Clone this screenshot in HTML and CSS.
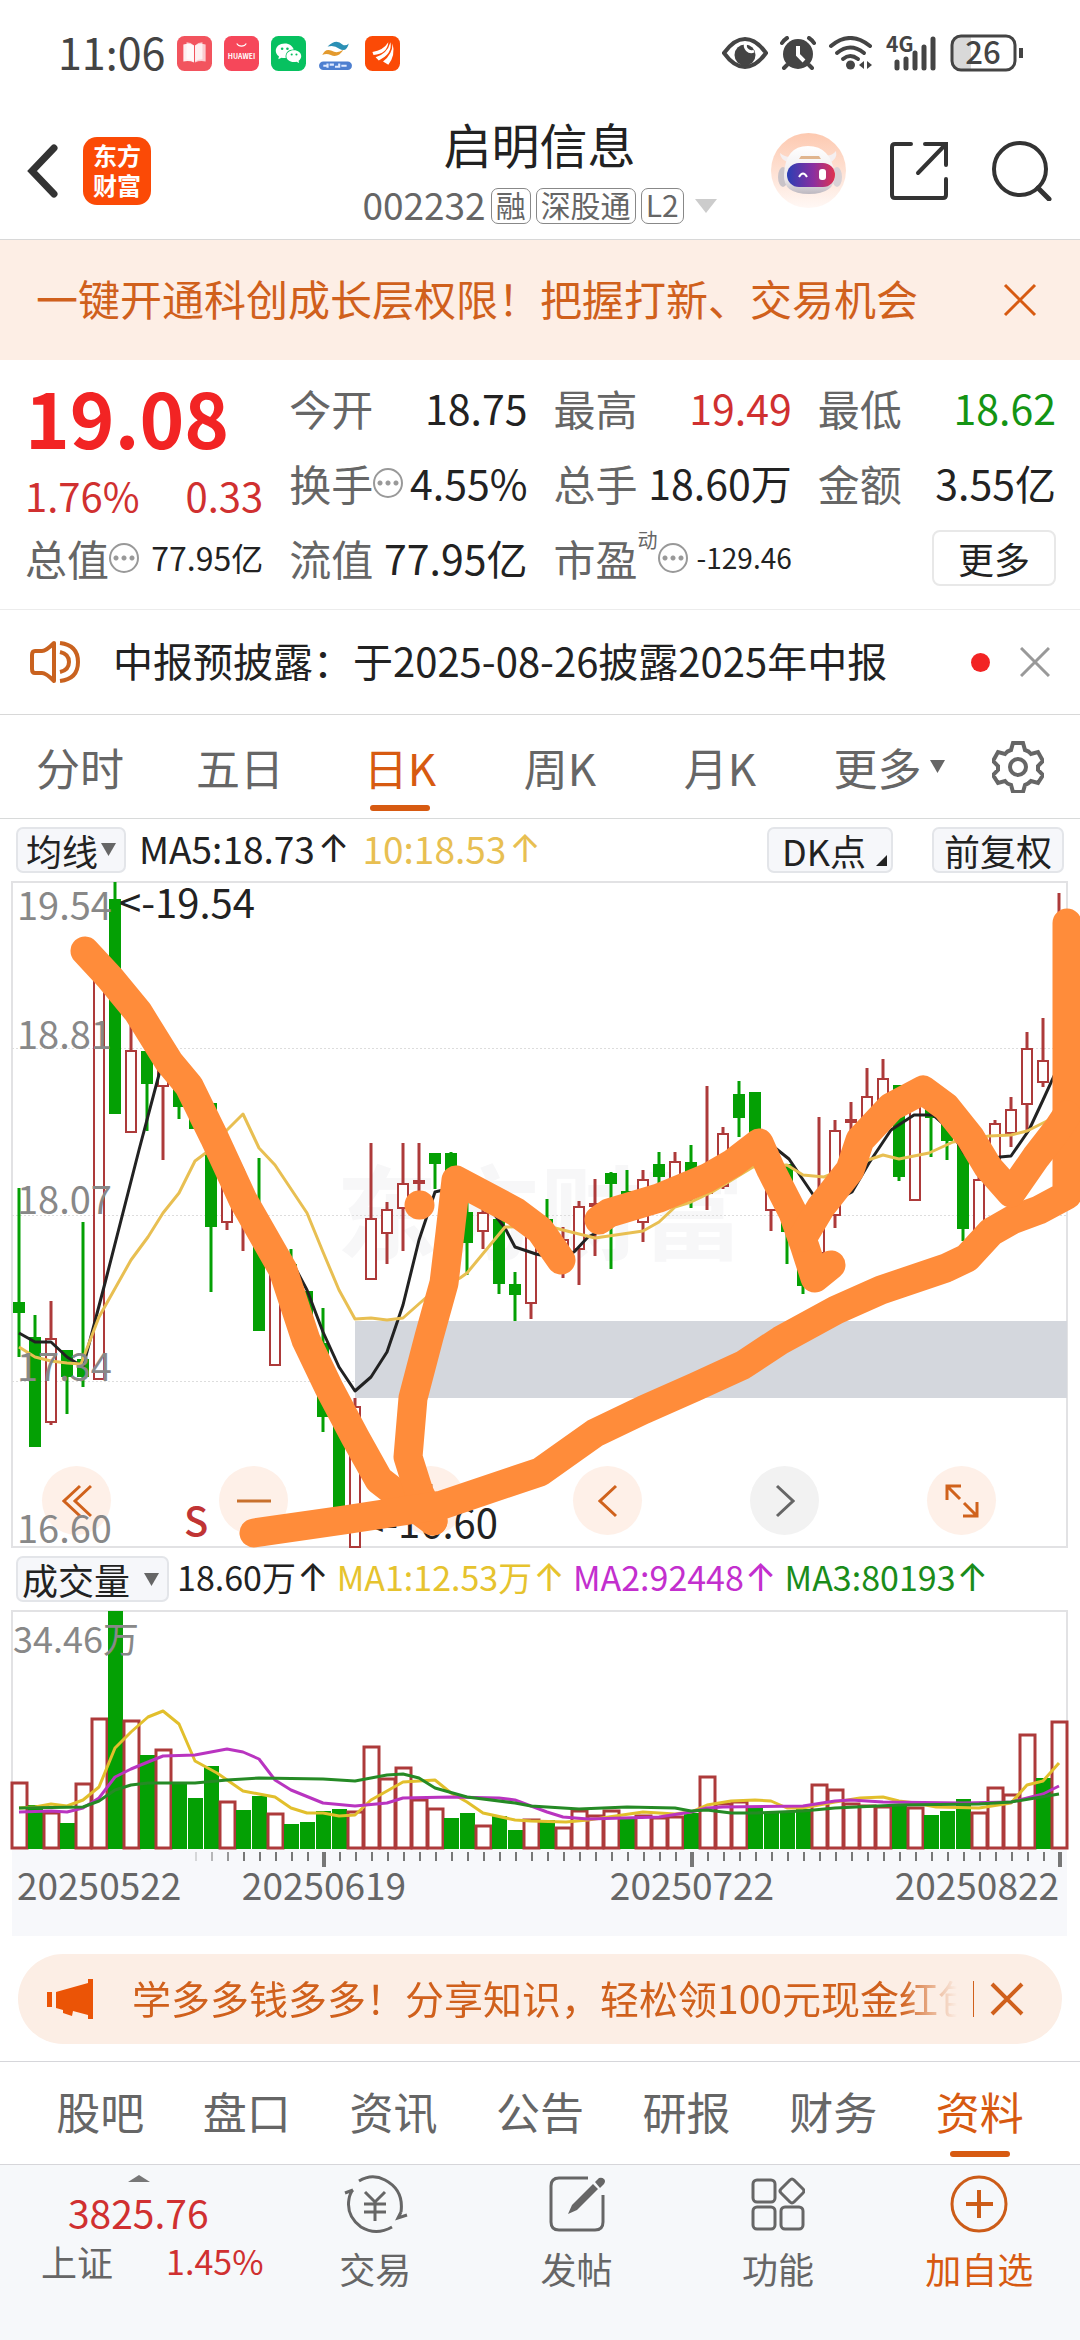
FILE: index.html
```html
<!DOCTYPE html>
<html lang="zh-CN">
<head>
    <meta charset="UTF-8">
    <meta name="viewport" content="width=device-width, initial-scale=1.0">
    <title>启明信息 002232</title>
    <link rel="stylesheet" href="styles.css">
</head>
<body>
    <div class="status">
        <span class="clock">11:06</span>
        <svg class="app-icon" viewBox="0 0 33 33"><rect width="33" height="33" rx="7" fill="#f2545e"/><path d="M6 8q6-2 10 1v16q-4-2-10-1z" fill="#fff" opacity=".9"/><path d="M27 8q-6-2-10 1v16q4-2 10-1z" fill="#fff" opacity=".7"/><path d="M9 6q4 0 7 3v15q-3-2-7-2zM24 6q-4 0-7 3v15q3-2 7-2z" fill="#fff" opacity=".7"/></svg>
        <svg class="app-icon" viewBox="0 0 33 33"><rect width="33" height="33" rx="7" fill="#f6475a"/><path d="M12 7a5 4.500 0 0 0 9 0" fill="none" stroke="#fff" stroke-width="1"/><text x="16.500" y="22" font-size="6.500" font-weight="700" fill="#fff" text-anchor="middle">HUAWEI</text></svg>
        <svg class="app-icon" viewBox="0 0 33 33"><rect width="33" height="33" rx="7" fill="#07c160"/><path d="M13 7c-5 0-8.500 3-8.500 7 0 2 1 4 3 5.200l-.6 2.800 3-1.600q2 .5 4 .3c-1-5 3-8.200 7.500-8C20.500 9.500 17.500 7 13 7z" fill="#fff"/><path d="M21.500 13.500c-4 0-7 2.500-7 5.500s3 5.500 7 5.500q1.500 0 2.500-.3l2.500 1.300-.5-2.200c1.500-1 2.500-2.500 2.500-4.300 0-3-3-5.500-7-5.500z" fill="#fff"/><g fill="#07c160"><circle cx="10.500" cy="12" r="1.200"/><circle cx="15.500" cy="12" r="1.200"/><circle cx="19.500" cy="17.500" r="1"/><circle cx="24" cy="17.500" r="1"/></g></svg>
        <svg class="app-icon" viewBox="0 0 33 33"><path d="M9 10q8-8 14-2 3 2 6-1-2 9-9 5-5-4-11-2z" fill="#2b90b5"/><path d="M24 13q-5 8-12 5-4-2-8 0 3-7 9-4 5 3 11-1z" fill="#e39a2e"/><rect x="1" y="24" width="31" height="8" rx="4" fill="#4d7fd0"/><path d="M5 28h3m1-2v4m2-3h4m1 2h3m1-3v4m2-2h5" stroke="#dfeaff" stroke-width="2"/></svg>
        <svg class="app-icon" viewBox="0 0 33 33"><rect width="33" height="33" rx="7" fill="#fb4a06"/><path d="M7 15q10-1 15-9-1 11-14 12zM10 20q11-3 14-14 2 11-11 17zM17 24q9-7 9-17 3 11-4 20z" fill="#fff"/></svg>
        <span class="status-space"></span>
        <svg width="46" height="34" viewBox="0 0 46 34"><path d="M2 17Q12 3 23 3t21 14Q34 31 23 31T2 17z" fill="none" stroke="#444" stroke-width="4"/><circle cx="23" cy="19" r="10.500" fill="#444"/><path d="M24 7a6 6 0 0 0 8 8 6 6 0 0 1-8-8z" fill="#fff" stroke="#fff" stroke-width="3"/></svg>
        <svg width="36" height="34" viewBox="0 0 36 34"><circle cx="18" cy="18" r="15" fill="#444"/><path d="M18 10v9l6 6" fill="none" stroke="#fff" stroke-width="4"/><path d="M2 7q2-3 5-5M34 7q-2-3-5-5M7 29l-3 3M29 29l3 3" stroke="#444" stroke-width="4" stroke-linecap="round"/></svg>
        <svg width="46" height="34" viewBox="0 0 46 34"><g fill="none" stroke="#444" stroke-width="4" stroke-linecap="round"><path d="M3 10Q22-6 42 10"/><path d="M9 17q13-11 27 0"/><path d="M15 23q7-6 15 0"/></g><circle cx="22.500" cy="29" r="4.500" fill="#444"/><path d="M31 29l5-4v8zM44 29l-5-4v8z" fill="#444"/></svg>
        <svg class="signal" width="52" height="36" viewBox="0 0 52 36"><text x="0" y="17" font-size="21" font-weight="700" fill="#444">4G</text><path d="M11 27v6M20 24v9M29 18v15M38 12v21M47 4v29" stroke="#444" stroke-width="5" stroke-linecap="round"/></svg>
        <svg width="74" height="38" viewBox="0 0 74 38"><path d="M10 2h11v34H10q-8 0-8-8V10q0-8 8-8z" fill="#d9d9d9"/><rect x="2" y="2" width="63" height="34" rx="9" fill="none" stroke="#444" stroke-width="3"/><path d="M71 14v10" stroke="#444" stroke-width="4"/><text x="33" y="30" font-size="31" font-weight="500" fill="#444" text-anchor="middle">26</text></svg>
    </div>

    <header class="header">
        <div class="header-left">
            <button type="button" class="icon-btn" aria-label="返回"><svg width="31" height="54" viewBox="0 0 31 54"><path d="M27 4L5 27l22 23" fill="none" stroke="#333" stroke-width="7" stroke-linecap="round"/></svg></button>
            <a class="logo" href="#">东方<br>财富</a>
        </div>
        <div class="header-title">
            <h1>启明信息</h1>
            <div class="code">
                <span class="code-num">002232</span>
                <span class="tag">融</span>
                <span class="tag">深股通</span>
                <span class="tag">L2</span>
                <svg class="code-arrow" width="22" height="14" viewBox="0 0 22 14"><path d="M0 0h22L11 14z" fill="#ccc"/></svg>
            </div>
        </div>
        <div class="header-right">
            <button type="button" class="icon-btn" aria-label="智能助手">
                <svg width="75" height="75" viewBox="0 0 75 75">
                    <defs>
                        <linearGradient id="halo" x1="0" y1="0" x2="0" y2="1"><stop offset="0" stop-color="#fdc9b0"/><stop offset="1" stop-color="#fff8f5"/></linearGradient>
                        <linearGradient id="visor"><stop offset="0" stop-color="#2a3fb4"/><stop offset=".55" stop-color="#8a2fa0"/><stop offset="1" stop-color="#e0334f"/></linearGradient>
                        <linearGradient id="shell" x1="0" y1="0" x2="0" y2="1"><stop offset="0" stop-color="#fff"/><stop offset=".7" stop-color="#ece8ea"/><stop offset="1" stop-color="#bdb8c0"/></linearGradient>
                    </defs>
                    <circle cx="37.500" cy="37.500" r="37.500" fill="url(#halo)"/>
                    <ellipse cx="12" cy="44" rx="5" ry="10" fill="#c9c3c8"/><ellipse cx="66" cy="44" rx="5" ry="10" fill="#d8d2d6"/>
                    <path d="M9 20q0 7 10 10l6-7q-9 3-16-3zM65 18q2 8-7 12l-6-8q8 2 13-4z" fill="#f5eff0"/>
                    <path d="M13 42Q14 13 37 13t27 29q0 19-26 19T13 42z" fill="url(#shell)"/>
                    <path d="M30 23h18l2 3H28z" fill="#e0b58e"/>
                    <rect x="16" y="30" width="48" height="24" rx="12" fill="url(#visor)"/>
                    <path d="M28 44q4-7 8 0" fill="none" stroke="#fff" stroke-width="2"/><rect x="48" y="36" width="7" height="11" rx="3" fill="#fff"/>
                </svg>
            </button>
            <button type="button" class="icon-btn" aria-label="分享"><svg width="60" height="60" viewBox="0 0 60 60"><path d="M22 3H6q-3 0-3 3v48q0 3 3 3h48q3 0 3-3V38M36 3h21v21M57 3L29 32" fill="none" stroke="#333" stroke-width="4" stroke-linecap="round"/></svg></button>
            <button type="button" class="icon-btn" aria-label="搜索"><svg width="60" height="60" viewBox="0 0 60 60"><circle cx="28" cy="28" r="26" fill="none" stroke="#333" stroke-width="4"/><path d="M46 47l11 11" stroke="#333" stroke-width="5" stroke-linecap="round"/></svg></button>
        </div>
    </header>

    <div class="banner">
        <a href="#">一键开通科创成长层权限！把握打新、交易机会</a>
        <button type="button" class="icon-btn" aria-label="关闭"><svg width="34" height="34" viewBox="0 0 34 34"><path d="M2 2l30 30M32 2L2 32" stroke="#d75a11" stroke-width="3"/></svg></button>
    </div>

    <section class="quote">
        <div class="quote-col">
            <div class="price">19.08</div>
            <div class="change"><span>1.76%</span><span>0.33</span></div>
            <div class="cell"><span class="label">总值</span><i class="dots"></i><span class="value small">77.95亿</span></div>
        </div>
        <div class="quote-col">
            <div class="cell"><span class="label">今开</span><span class="value">18.75</span></div>
            <div class="cell"><span class="label">换手</span><i class="dots"></i><span class="value">4.55%</span></div>
            <div class="cell"><span class="label">流值</span><span class="value">77.95亿</span></div>
        </div>
        <div class="quote-col">
            <div class="cell"><span class="label">最高</span><span class="value red">19.49</span></div>
            <div class="cell"><span class="label">总手</span><span class="value">18.60万</span></div>
            <div class="cell"><span class="label">市盈<sup>动</sup></span><i class="dots"></i><span class="value tiny">-129.46</span></div>
        </div>
        <div class="quote-col">
            <div class="cell"><span class="label">最低</span><span class="value green">18.62</span></div>
            <div class="cell"><span class="label">金额</span><span class="value">3.55亿</span></div>
            <div class="cell cell-end"><button type="button" class="more-btn">更多</button></div>
        </div>
    </section>

    <div class="notice">
        <svg width="52" height="44" viewBox="0 0 52 44"><g fill="none" stroke="#c9621f" stroke-width="4"><path d="M25 3v38q-8-8-12-8H6q-3 0-3-4V15q0-4 3-4h7q4 0 12-8z" stroke-linejoin="round"/><path d="M31 12q9 2 9 10t-9 10"/><path d="M31 3q18 2 18 19T31 41"/></g></svg>
        <a href="#">中报预披露：于2025-08-26披露2025年中报</a>
        <span class="red-dot"></span>
        <button type="button" class="icon-btn" aria-label="关闭"><svg width="30" height="30" viewBox="0 0 30 30"><path d="M1 1l28 28M29 1L1 29" stroke="#999" stroke-width="3"/></svg></button>
    </div>

    <nav class="periods">
        <button type="button">分时</button>
        <button type="button">五日</button>
        <button type="button" class="active">日K</button>
        <button type="button">周K</button>
        <button type="button">月K</button>
        <button type="button" class="wide">更多<svg width="15" height="13" viewBox="0 0 15 13"><path d="M0 0h15L7.500 13z" fill="#666"/></svg></button>
        <button type="button" class="gear" aria-label="设置"><svg width="52" height="52" viewBox="0 0 52 52"><path d="M21 2h10l2 7q4 1 6 4l7-2 5 9-5 5v4l5 5-5 8-7-2q-3 3-6 4l-2 7H21l-2-7q-4-1-6-4l-7 2-5-8 5-5v-4l-5-5 5-9 7 2q2-3 6-4z" fill="none" stroke="#666" stroke-width="4"/><circle cx="26" cy="26" r="8" fill="none" stroke="#666" stroke-width="4"/></svg></button>
    </nav>

    <div class="toolbar">
        <button type="button" class="chip">均线<svg width="15" height="13" viewBox="0 0 15 13"><path d="M0 0h15L7.500 13z" fill="#666"/></svg></button>
        <span class="ma">MA5:18.73<b>↑</b></span>
        <span class="ma ma-gold">10:18.53<b>↑</b></span>
        <button type="button" class="chip chip-dk">DK点<svg width="11" height="11" viewBox="0 0 11 11"><path d="M11 0v11H0z" fill="#222"/></svg></button>
        <button type="button" class="chip chip-fq">前复权</button>
    </div>

    <div class="kline">
        <svg class="chart" viewBox="0 0 1080 670">
            <text class="watermark" x="336" y="372">东方财富</text>
            <rect x="12" y="2" width="1055" height="665" fill="none" stroke="#e2e2e4" stroke-width="2"/>
            <path d="M12 168.500h1055M12 335.500h1055M12 501.500h1055" stroke="#ddd" stroke-dasharray="2 2"/>
            <rect x="355" y="441" width="712" height="77" fill="#d4d7dd"/>
            <g id="candles"></g>
            <polyline class="line" stroke="#222" points="19,453 35,462 51,462 67,477 83,487 105,403 139,270 161,187 179,190 211,235 234,272 243,290 254,320 291,380 307,410 323,452 339,487 355,511 371,497 387,472 403,425 419,360 435,312 451,308 483,320 505,348 515,367 536,374 563,380 575,371 588,357 643,330 707,302 755,255 774,267 789,279 814,316 846,315 852,312 869,283 891,250 914,235 933,235 950,250 964,273 979,285 1000,277 1011,276 1029,250 1043,220 1059,185"/>
            <polyline class="line" stroke="#e8bf52" points="19,467 35,477 51,481 67,483 81,484 99,437 131,380 148,357 163,333 179,313 195,281 207,272 227,250 243,234 259,268 275,285 307,333 323,372 339,410 355,439 371,438 387,440 403,438 429,415 460,398 467,393 505,347 547,346 563,350 595,358 643,351 659,342 675,327 691,322 712,312 753,287 787,285 803,295 824,297 871,279 883,275 899,279 929,273 953,262 989,256 1011,255 1027,251 1059,235"/>
        </svg>
        <div class="chart-controls">
            <button type="button" aria-label="最左"><svg width="30" height="34" viewBox="0 0 30 34"><path d="M18 2L2 17l16 15M29 2L13 17l16 15" fill="none" stroke="#d0621c" stroke-width="3"/></svg></button>
            <button type="button" aria-label="缩小"><svg width="34" height="34" viewBox="0 0 34 34"><path d="M0 17h34" stroke="#c8702c" stroke-width="3"/></svg></button>
            <button type="button" aria-label="放大"><svg width="34" height="34" viewBox="0 0 34 34"><path d="M0 17h34M17 0v34" stroke="#c8702c" stroke-width="3"/></svg></button>
            <button type="button" aria-label="左移"><svg width="20" height="34" viewBox="0 0 20 34"><path d="M18 2L2 17l16 15" fill="none" stroke="#d0621c" stroke-width="3"/></svg></button>
            <button type="button" class="off" aria-label="右移"><svg width="20" height="34" viewBox="0 0 20 34"><path d="M2 2l16 15L2 32" fill="none" stroke="#666" stroke-width="3"/></svg></button>
            <button type="button" aria-label="全屏"><svg width="34" height="34" viewBox="0 0 34 34"><path d="M2 16V2h14M2 2l13 13M32 18v14H18M32 32L19 19" fill="none" stroke="#d0621c" stroke-width="3"/></svg></button>
        </div>
        <svg class="overlay" viewBox="0 0 1080 670">
            <g class="axis">
                <text x="17" y="40">19.54</text>
                <text x="17" y="169">18.81</text>
                <text x="17" y="334">18.07</text>
                <text x="17" y="501">17.34</text>
                <text x="17" y="663">16.60</text>
            </g>
            <g class="mark">
                <text x="119" y="38">&lt;-19.54</text>
                <text x="362" y="658">&lt;-16.60</text>
            </g>
            <text class="sell" x="184" y="656">S</text>
            <g class="brush">
                <path d="M85 71L110 98 138 132 169 182 189 206 214 257 220 270 243 320 283 390 306 460 329 508 355 557 379 600 401 617 433 641"/>
                <path d="M433 641L419 612 408 577 413 518 429 457 444 403 450 353 456 300 516 332 540 350 561 380"/>
                <path d="M419 325h1"/>
                <path d="M254 653L344 640 442 625 516 600 540 592 571 570 595 553 643 530 695 507 743 485 781 460 836 430 881 410 946 388 967 378 991 352 1012 340 1039 330 1067 315V43"/>
                <path d="M599 340L609 333 659 318 707 298 733 283 759 263 771 290 793 333 805 367 815 398 831 385"/>
                <path d="M803 357L821 327 850 290 860 260 891 227 923 210 946 227 970 257 988 287 1011 313 1036 277 1057 250 1067 235"/>
            </g>
        </svg>
    </div>

    <div class="toolbar toolbar-vol">
        <button type="button" class="chip chip-vol">成交量<svg width="15" height="13" viewBox="0 0 15 13"><path d="M0 0h15L7.500 13z" fill="#666"/></svg></button>
        <span class="ma">18.60万<b>↑</b></span>
        <span class="ma ma-yellow">MA1:12.53万<b>↑</b></span>
        <span class="ma ma-purple">MA2:92448<b>↑</b></span>
        <span class="ma ma-green">MA3:80193<b>↑</b></span>
    </div>

    <svg class="chart" viewBox="0 8 1080 328">
        <rect x="12" y="249" width="1055" height="87" fill="#f7f8fb"/>
        <path d="M12 249V11h1055v238" fill="none" stroke="#e2e2e4" stroke-width="2"/>
        <g id="volumes"></g>
        <g id="ticks"></g>
        <polyline class="line" stroke="#e2bf2c" points="19,208 35,207 51,204 67,206 83,200 99,187 115,148 131,132 148,117 163,111 179,124 195,161 217,173 243,191 259,194 275,197 291,208 307,213 323,213 339,216 355,215 371,200 403,182 435,180 451,193 467,202 483,213 515,220 531,221 566,222 588,220 643,212 675,214 691,212 707,205 731,201 755,200 771,201 787,208 803,208 835,202 860,198 883,197 899,201 915,203 936,207 979,208 1011,203 1027,185 1043,181 1059,163"/>
        <polyline class="line" stroke="#b934c0" points="19,212 51,211 67,212 83,208 99,198 115,177 131,169 148,162 163,156 195,155 227,149 243,152 259,159 275,180 291,190 323,203 355,206 387,203 403,198 451,197 499,198 515,200 547,212 563,217 588,219 659,217 691,212 707,208 723,207 803,206 835,201 851,200 883,202 963,203 1011,202 1043,194 1059,186"/>
        <polyline class="line" stroke="#258a25" points="19,208 83,207 99,201 115,190 131,185 148,183 195,183 227,180 259,178 323,179 355,181 387,175 403,174 419,178 435,188 467,197 515,203 531,206 579,209 627,207 675,208 691,211 707,210 731,213 755,213 803,211 835,208 899,205 979,204 1011,202 1059,194"/>
        <text class="vol-max" x="13" y="53">34.46万</text>
        <g class="dates">
            <text x="17" y="300">20250522</text>
            <text x="324" y="300" text-anchor="middle">20250619</text>
            <text x="692" y="300" text-anchor="middle">20250722</text>
            <text x="1059" y="300" text-anchor="end">20250822</text>
        </g>
    </svg>

    <div class="promo">
        <svg width="46" height="40" viewBox="0 0 46 40"><path d="M0 13h5v15H0zM9 13L41 4V0h5v40h-5v-4l-15-4-1 5-9-3v-3l-7-2z" fill="#eb5406"/></svg>
        <a href="#">学多多钱多多！分享知识，轻松领100元现金红包</a>
        <span class="promo-line"></span>
        <button type="button" class="icon-btn" aria-label="关闭"><svg width="34" height="34" viewBox="0 0 34 34"><path d="M2 2l30 30M32 2L2 32" stroke="#d0601c" stroke-width="4"/></svg></button>
    </div>

    <nav class="sections">
        <a href="#">股吧</a>
        <a href="#">盘口</a>
        <a href="#">资讯</a>
        <a href="#">公告</a>
        <a href="#">研报</a>
        <a href="#">财务</a>
        <a href="#" class="active">资料</a>
    </nav>

    <footer class="bottom">
        <div class="index">
            <svg width="22" height="7" viewBox="0 0 22 7"><path d="M0 7L11 0l11 7z" fill="#777"/></svg>
            <div class="index-num">3825.76</div>
            <div class="index-row"><span>上证</span><span class="red">1.45%</span></div>
        </div>
        <button type="button" class="action">
            <svg width="66" height="60" viewBox="0 0 66 60"><g fill="none" stroke="#666" stroke-width="3"><path d="M17 7Q30-1 43 6q19 10 16 32M3 19l8-3M50 53Q34 62 19 53 4 42 7 25q1-6 4-9M59 38l-3 6 9-3"/><path d="M23 18l10 10 10-10M33 28v19M22 30h22M22 38h22"/></g></svg>
            交易
        </button>
        <button type="button" class="action">
            <svg width="56" height="60" viewBox="0 0 56 60"><path d="M39 4H10q-8 0-8 8v36q0 8 8 8h36q8 0 8-8V21" fill="none" stroke="#666" stroke-width="3"/><path d="M19 40l4-9 21-21 5 5-21 21zM46 8l4-4q3-1 5 1t0 5l-4 4z" fill="#666"/></svg>
            发帖
        </button>
        <button type="button" class="action">
            <svg width="54" height="60" viewBox="0 0 54 60"><g fill="none" stroke="#666" stroke-width="3"><rect x="2" y="6" width="22" height="22" rx="4"/><rect x="2" y="33" width="22" height="22" rx="4"/><rect x="30" y="33" width="22" height="22" rx="4"/><path d="M39 6q2-2 4 0l9 9q2 2 0 4l-9 9q-2 2-4 0l-9-9q-2-2 0-4z"/></g></svg>
            功能
        </button>
        <button type="button" class="action action-add">
            <svg width="58" height="60" viewBox="0 0 58 60"><circle cx="29" cy="30" r="27" fill="none" stroke="#cc5c18" stroke-width="3"/><path d="M16 30h27M29 16v28" stroke="#cc5c18" stroke-width="4"/></svg>
            加自选
        </button>
    </footer>

    <script src="script.js"></script>
</body>
</html>
```
FILE: styles.css
```css
* {
    box-sizing: border-box;
}

body {
    margin: 0;
    background-color: #fff;
    color: #222;
    font-family: "Noto Sans CJK SC", sans-serif;
    min-height: 100vh;
    display: flex;
    flex-direction: column;
    overflow-x: hidden;
}

button {
    font-family: inherit;
    color: inherit;
    background: none;
    border: none;
    padding: 0;
    margin: 0;
    cursor: pointer;
}

a {
    color: inherit;
    text-decoration: none;
}

svg {
    display: block;
    flex-shrink: 0;
}

.icon-btn {
    display: flex;
}

.red {
    color: #d03030;
}

.green {
    color: #149414;
}

/* status bar */
.status {
    height: 80px;
    padding: 26px 56px 0 58px;
    display: flex;
    align-items: center;
    gap: 12px;
}

.clock {
    font-size: 43px;
    line-height: 52px;
    padding-bottom: 4px;
    color: #444;
}

.app-icon {
    width: 35px;
    height: 35px;
}

.signal {
    overflow: visible;
}

.status-space {
    flex: 1;
}

/* header */
.header {
    display: grid;
    grid-template-columns: 1fr auto 1fr;
    align-items: center;
    padding: 37px 28px 15px 27px;
    border-bottom: 1px solid #d8d8d8;
}

.header-left,
.header-right {
    display: flex;
    align-items: center;
}

.header-left {
    gap: 25px;
}

.header-right {
    justify-content: flex-end;
    gap: 43px;
}

.logo {
    width: 68px;
    height: 68px;
    padding-top: 3px;
    border-radius: 14px;
    background-color: #fb4a06;
    color: #fff;
    font-size: 24px;
    line-height: 30px;
    font-weight: 700;
    text-align: center;
}

.header-title {
    display: flex;
    flex-direction: column;
    align-items: center;
    gap: 15px;
}

.header-title h1 {
    margin: 0;
    padding-bottom: 4px;
    font-size: 48px;
    line-height: 52px;
    font-weight: 400;
}

.code {
    display: flex;
    align-items: center;
    gap: 5px;
    color: #666;
}

.code-num {
    padding-bottom: 4px;
    font-size: 37px;
    line-height: 32px;
}

.tag {
    height: 36px;
    padding: 0 4px;
    border: 1px solid #888;
    border-radius: 7px;
    font-size: 30px;
    line-height: 30px;
}

.code-arrow {
    margin-left: 6px;
}

/* top banner */
.banner {
    height: 120px;
    padding: 0 43px 0 36px;
    display: flex;
    align-items: center;
    justify-content: space-between;
    background-color: #fdeee5;
    color: #d0601c;
    font-size: 42px;
}

.banner a,
.notice a,
.promo a {
    padding-bottom: 5px;
}

/* quote */
.quote {
    display: grid;
    grid-template-columns: repeat(4, 1fr);
    column-gap: 26px;
    padding: 10px 24px 14px 25px;
    border-bottom: 1px solid #ececec;
}

.price {
    color: #f22424;
    font-size: 76px;
    line-height: 92px;
    padding-bottom: 8px;
    font-weight: 700;
}

.change {
    display: flex;
    justify-content: space-between;
    color: #d03030;
    font-size: 40px;
    line-height: 50px;
}

.cell {
    height: 75px;
    display: flex;
    align-items: center;
    line-height: 75px;
    white-space: nowrap;
}

.cell-end {
    justify-content: flex-end;
}

.label {
    color: #666;
    font-size: 42px;
}

.label sup {
    font-size: 20px;
    line-height: 20px;
    vertical-align: 28px;
}

.value {
    margin-left: auto;
    font-size: 41px;
}

.small {
    font-size: 32px;
}

.tiny {
    font-size: 28px;
}

.dots {
    width: 30px;
    height: 30px;
    flex-shrink: 0;
    border: 2px solid #999;
    border-radius: 50%;
    background: radial-gradient(circle, #999 2px, transparent 3px) center / 8px 26px repeat-x;
    background-clip: content-box;
    padding: 0 2px;
}

.more-btn {
    width: 124px;
    height: 56px;
    border: 2px solid #e8e8e8;
    border-radius: 8px;
    font-size: 36px;
    line-height: 46px;
}

/* notice */
.notice {
    height: 105px;
    padding: 0 30px 0 29px;
    display: flex;
    align-items: center;
    border-bottom: 1px solid #d8d8d8;
    font-size: 40px;
}

.notice a {
    flex: 1;
    margin-left: 32px;
}

.red-dot {
    width: 19px;
    height: 19px;
    margin-right: 30px;
    border-radius: 50%;
    background-color: #f22424;
}

/* period tabs */
.periods {
    height: 104px;
    padding-right: 22px;
    display: flex;
    border-bottom: 1px solid #d8dada;
    color: #666;
}

.periods button {
    flex: 160;
    position: relative;
    font-size: 44px;
    line-height: 98px;
}

.periods .wide {
    flex: 178;
    display: flex;
    align-items: center;
    justify-content: center;
    gap: 8px;
}

.periods .gear {
    flex: 80;
    display: flex;
    align-items: center;
    justify-content: center;
}

.periods .active,
.sections .active {
    color: #d75a11;
}

.periods .active::after,
.sections .active::after {
    content: "";
    position: absolute;
    left: 50%;
    bottom: 7px;
    width: 60px;
    height: 6px;
    margin-left: -30px;
    border-radius: 3px;
    background-color: #d75a11;
}

/* chart toolbars */
.toolbar {
    height: 61px;
    padding: 0 16px;
    display: flex;
    align-items: center;
    gap: 13px;
    font-size: 37px;
    white-space: nowrap;
}

.chip {
    height: 46px;
    padding: 0 8px;
    display: flex;
    align-items: center;
    gap: 3px;
    border: 2px solid #e3e5e9;
    border-radius: 7px;
    background-color: #f6f7fa;
    color: #222;
    font-size: 36px;
    line-height: 38px;
}

.chip-dk {
    margin-left: auto;
    padding: 0 4px 0 13px;
    gap: 10px;
}

.chip-dk svg {
    align-self: flex-end;
    margin-bottom: 5px;
}

.chip-fq {
    margin-left: 26px;
    padding: 0 10px;
}

.ma {
    display: flex;
    align-items: center;
    gap: 3px;
    line-height: 46px;
    padding-bottom: 4px;
}

.ma b {
    font-family: Inter, sans-serif;
    font-weight: 400;
    font-size: 38px;
}

.ma-gold {
    color: #e8bf52;
}

.ma-yellow {
    color: #e6c32e;
}

.ma-purple {
    color: #c32fce;
}

.ma-green {
    color: #1a8c1a;
}

.toolbar-vol {
    height: 58px;
    gap: 8px;
    font-size: 34px;
}

.toolbar-vol .ma {
    gap: 1px;
}

.chip-vol {
    padding: 0 8px 0 4px;
    gap: 14px;
}

/* charts */
.kline {
    position: relative;
}

.chart {
    width: 100%;
    height: auto;
}

.overlay {
    position: absolute;
    inset: 0;
    width: 100%;
    height: 100%;
    pointer-events: none;
}

.chart-controls {
    position: absolute;
    left: 42px;
    right: 84px;
    bottom: 15px;
    display: flex;
    justify-content: space-between;
}

.chart-controls button {
    width: 69px;
    height: 69px;
    display: flex;
    align-items: center;
    justify-content: center;
    border-radius: 50%;
    background-color: #fef0e8;
}

.chart-controls .off {
    background-color: #f2f2f2;
}

.line {
    fill: none;
    stroke-width: 3;
    stroke-linejoin: round;
}

.up {
    fill: #fff;
    stroke: #ad3a3a;
    stroke-width: 2;
}

.down {
    fill: #04a004;
    stroke: #04a004;
    stroke-width: 2;
}

path.up,
path.down,
#volumes .up {
    stroke-width: 3;
}

.watermark {
    fill: #f7f7f8;
    font-size: 102px;
    font-weight: 700;
}

.axis {
    fill: #888;
    font-size: 38px;
}

.mark {
    fill: #222;
    font-size: 40px;
}

.sell {
    fill: #c03434;
    font-size: 40px;
    font-weight: 500;
}

.brush {
    fill: none;
    stroke: #ff8c3a;
    stroke-width: 29;
    stroke-linecap: round;
    stroke-linejoin: round;
}

.vol-max {
    fill: #888;
    font-size: 36px;
}

.dates {
    fill: #666;
    font-size: 37px;
}

/* promo pill */
.promo {
    height: 90px;
    margin: 18px 18px 17px;
    padding: 0 38px 0 29px;
    display: flex;
    align-items: center;
    border-radius: 45px;
    background-color: #fceee5;
    color: #d0601c;
    font-size: 39px;
    white-space: nowrap;
}

.promo a {
    flex: 1;
    overflow: hidden;
    margin-left: 39px;
    -webkit-mask-image: linear-gradient(to right, #000 93%, transparent);
    mask-image: linear-gradient(to right, #000 93%, transparent);
}

.promo-line {
    width: 1px;
    height: 36px;
    margin: 0 16px;
    background-color: #d0601c;
}

/* section tabs */
.sections {
    height: 104px;
    padding: 0 27px;
    display: flex;
    border-top: 1px solid #d6d6da;
    border-bottom: 1px solid #d6d6da;
    color: #666;
    font-size: 44px;
    line-height: 98px;
}

.sections a {
    flex: 1;
    position: relative;
    text-align: center;
}

/* bottom bar */
.bottom {
    flex: 1;
    display: grid;
    grid-template-columns: 274fr repeat(4, 201fr);
    background-color: #f6f8fa;
    color: #666;
    font-size: 36px;
}

.index {
    padding: 10px 11px 0 41px;
}

.index svg {
    margin: 0 auto;
    position: relative;
    right: 13px;
}

.index-num {
    padding-right: 28px;
    color: #d03030;
    font-size: 39px;
    line-height: 60px;
    text-align: center;
}

.index-row {
    display: flex;
    justify-content: space-between;
    line-height: 38px;
}

.index-row .red {
    font-size: 34px;
}

.action {
    display: flex;
    flex-direction: column;
    align-items: center;
    gap: 12px;
    padding-top: 9px;
    font-size: 36px;
    line-height: 44px;
}

.action-add {
    color: #d75a11;
}
```
FILE: script.js
```js
const NS = "http://www.w3.org/2000/svg";
const STEP = 16;
const FIRST = 19;

// one row per day: direction, high, body top, body bottom, low
const candles = [
    ["d", 308, 423, 432, 477], ["d", 435, 458, 566, 566], ["u", 421, 459, 542, 545], ["d", 471, 471, 496, 534],
    ["d", 342, 480, 496, 507], ["u", 102, 102, 499, 500], ["d", 2, 20, 233, 233], ["u", 140, 171, 252, 252],
    ["d", 165, 172, 203, 251], ["u", 185, 185, 206, 280], ["d", 200, 200, 226, 239], ["d", 233, 233, 248, 248],
    ["d", 224, 224, 346, 412], ["u", 290, 290, 342, 350], ["u", 300, 310, 330, 371], ["d", 278, 345, 450, 450],
    ["u", 380, 380, 485, 485], ["d", 369, 385, 398, 400], ["d", 412, 412, 460, 460], ["d", 428, 464, 536, 552],
    ["d", 530, 530, 627, 627], ["u", 518, 527, 667, 667], ["u", 263, 339, 399, 399], ["u", 322, 330, 353, 384],
    ["u", 263, 304, 328, 371], ["u", 263, 301, 303, 338], ["d", 274, 274, 283, 309], ["d", 272, 274, 300, 300],
    ["d", 320, 333, 362, 395], ["u", 320, 333, 351, 369], ["d", 340, 340, 403, 414], ["d", 392, 405, 414, 441],
    ["u", 350, 350, 423, 439], ["d", 319, 340, 365, 365], ["u", 347, 360, 390, 398], ["u", 321, 327, 369, 405],
    ["u", 299, 324, 326, 376], ["d", 292, 294, 303, 389], ["d", 290, 312, 330, 330], ["u", 290, 300, 342, 362],
    ["d", 272, 285, 296, 320], ["u", 272, 282, 310, 310], ["d", 265, 283, 292, 328], ["u", 206, 290, 313, 330],
    ["u", 247, 254, 306, 309], ["d", 201, 215, 237, 257], ["d", 213, 213, 260, 260], ["u", 290, 300, 330, 351],
    ["d", 285, 285, 351, 384], ["d", 340, 340, 405, 414], ["u", 237, 320, 373, 380], ["u", 240, 251, 335, 348],
    ["u", 222, 240, 242, 263], ["u", 188, 217, 242, 242], ["u", 179, 199, 240, 240], ["d", 206, 206, 296, 301],
    ["u", 225, 225, 320, 320], ["d", 225, 225, 237, 277], ["d", 243, 243, 260, 280], ["d", 258, 258, 348, 361],
    ["u", 294, 300, 352, 352], ["u", 240, 244, 280, 280], ["u", 217, 230, 253, 267], ["u", 152, 169, 224, 250],
    ["u", 138, 181, 202, 207], ["u", 13, 105, 182, 182]
];

const volumes = [
    ["u", 182], ["d", 205], ["u", 212], ["d", 223], ["u", 183], ["u", 118], ["d", 11], ["u", 120], ["d", 155], ["u", 149],
    ["d", 183], ["d", 198], ["d", 166], ["u", 201], ["d", 210], ["d", 196], ["u", 213], ["d", 224], ["d", 222], ["d", 211],
    ["d", 209], ["u", 211], ["u", 146], ["u", 178], ["u", 167], ["u", 199], ["u", 208], ["d", 218], ["d", 213], ["u", 225],
    ["d", 216], ["d", 230], ["u", 219], ["d", 220], ["u", 227], ["u", 210], ["u", 215], ["u", 210], ["d", 218], ["u", 215],
    ["u", 217], ["u", 216], ["d", 213], ["u", 176], ["u", 203], ["u", 201], ["d", 207], ["d", 212], ["d", 211], ["d", 209],
    ["u", 184], ["u", 189], ["u", 203], ["u", 205], ["u", 206], ["d", 205], ["u", 207], ["d", 215], ["d", 211], ["d", 199],
    ["u", 212], ["u", 187], ["u", 194], ["u", 134], ["d", 178], ["u", 121]
];

function add(parent, tag, attrs) {
    const el = document.createElementNS(NS, tag);
    for (const key in attrs) {
        el.setAttribute(key, attrs[key]);
    }
    parent.appendChild(el);
}

const candleLayer = document.getElementById("candles");
candles.forEach(([dir, high, top, bottom, low], i) => {
    const x = FIRST + i * STEP;
    const cls = dir === "u" ? "up" : "down";
    add(candleLayer, "path", { class: cls, d: `M${x} ${high}V${top}M${x} ${bottom}V${low}` });
    add(candleLayer, "rect", { class: cls, x: x - 5, y: top, width: 10, height: bottom - top });
});

const volumeLayer = document.getElementById("volumes");
volumes.forEach(([dir, top], i) => {
    const x = FIRST + i * STEP;
    if (dir === "u") {
        add(volumeLayer, "rect", { class: "up", x: x - 7, y: top + 1, width: 15, height: 247 - top });
    } else {
        add(volumeLayer, "rect", { class: "down", x: x - 6, y: top + 1, width: 13, height: 247 - top });
    }
});

const tickLayer = document.getElementById("ticks");
for (let i = 11; i < candles.length; i++) {
    const major = i === 19 || i === 42 || i === 65;
    add(tickLayer, "path", {
        d: `M${FIRST + i * STEP + 1} 252v${major ? 15 : 9}`,
        stroke: "#777",
        "stroke-width": major ? 4 : 2,
        opacity: Math.min(1, (i - 10) / 4)
    });
}
```
